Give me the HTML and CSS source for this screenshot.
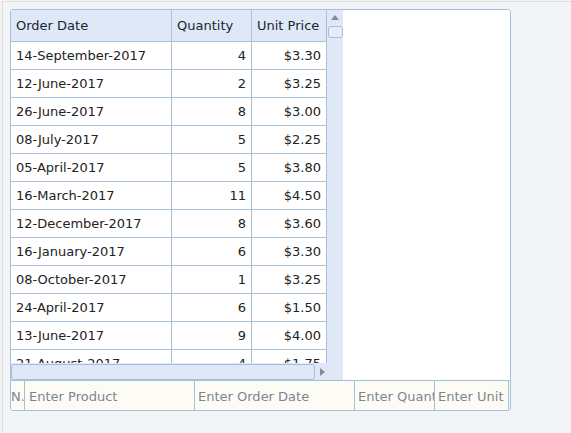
FILE: index.html
```html
<!DOCTYPE html>
<html lang="en">
<head>
  <meta charset="UTF-8">
  <title>Orders Grid</title>
  <link rel="stylesheet" href="styles.css">
</head>
<body>
  <div class="frame">
    <div class="grid">
      <div class="top">
        <div class="pane">
          <div class="view">
            <div class="row head">
              <div class="cell">Order Date</div>
              <div class="cell">Quantity</div>
              <div class="cell">Unit Price</div>
            </div>
            <div class="row"><div class="cell">14-September-2017</div><div class="cell num">4</div><div class="cell num">$3.30</div></div>
            <div class="row"><div class="cell">12-June-2017</div><div class="cell num">2</div><div class="cell num">$3.25</div></div>
            <div class="row"><div class="cell">26-June-2017</div><div class="cell num">8</div><div class="cell num">$3.00</div></div>
            <div class="row"><div class="cell">08-July-2017</div><div class="cell num">5</div><div class="cell num">$2.25</div></div>
            <div class="row"><div class="cell">05-April-2017</div><div class="cell num">5</div><div class="cell num">$3.80</div></div>
            <div class="row"><div class="cell">16-March-2017</div><div class="cell num">11</div><div class="cell num">$4.50</div></div>
            <div class="row"><div class="cell">12-December-2017</div><div class="cell num">8</div><div class="cell num">$3.60</div></div>
            <div class="row"><div class="cell">16-January-2017</div><div class="cell num">6</div><div class="cell num">$3.30</div></div>
            <div class="row"><div class="cell">08-October-2017</div><div class="cell num">1</div><div class="cell num">$3.25</div></div>
            <div class="row"><div class="cell">24-April-2017</div><div class="cell num">6</div><div class="cell num">$1.50</div></div>
            <div class="row"><div class="cell">13-June-2017</div><div class="cell num">9</div><div class="cell num">$4.00</div></div>
            <div class="row"><div class="cell">21-August-2017</div><div class="cell num">4</div><div class="cell num">$1.75</div></div>
          </div>
          <div class="vscroll">
            <span class="arrow-up"></span>
            <span class="vthumb"></span>
          </div>
          <div class="hscroll">
            <span class="hthumb"></span>
            <span class="arrow-right"></span>
          </div>
          <div class="corner"></div>
        </div>
        <div class="blank"></div>
      </div>
      <div class="editor">
        <div class="ecell e-no">N.</div>
        <div class="ecell e-product">Enter Product</div>
        <div class="ecell e-date">Enter Order Date</div>
        <div class="ecell e-qty">Enter Quantity</div>
        <div class="ecell e-price">Enter Unit Price</div>
      </div>
    </div>
  </div>
</body>
</html>
```

FILE: styles.css
```css
body {
  margin: 0;
  background-color: #f3f4f6;
  font-family: "DejaVu Sans", Verdana, sans-serif;
  font-size: 13px;
  color: #222;
}

.frame {
  margin: 1px 0 0 2px;
  border-top: 1px solid #dcdde0;
  border-left: 1px solid #dcdde0;
  height: 431px;
  padding: 7px 0 0 7px;
  box-sizing: border-box;
}

.grid {
  width: 499px;
  height: 400px;
  border: 1px solid #a3bfdc;
  border-radius: 3px;
  background-color: #fff;
  display: flex;
  flex-direction: column;
  overflow: hidden;
}

.top {
  display: flex;
  height: 370px;
}

.pane {
  display: grid;
  grid-template-columns: 315px 17px;
  grid-template-rows: 353px 17px;
  background-color: #dfe8f6;
}

.view {
  overflow: hidden;
  background-color: #fff;
}

.row {
  display: grid;
  grid-template-columns: 161px 80px 74px;
  height: 28px;
}

.cell {
  border-right: 1px solid #a9c2dc;
  border-bottom: 1px solid #a9c2dc;
  padding: 0 5px;
  line-height: 27px;
  white-space: nowrap;
  overflow: hidden;
}

.cell:last-child {
  border-right: none;
}

.num {
  text-align: right;
}

.head {
  height: 32px;
  background-color: #dfe8f6;
}

.head .cell {
  line-height: 31px;
  color: #1b2333;
}

.vscroll {
  border-left: 1px solid #a9c2dc;
  display: flex;
  flex-direction: column;
  align-items: center;
}

.arrow-up {
  margin-top: 5px;
  width: 0;
  height: 0;
  border-left: 4px solid transparent;
  border-right: 4px solid transparent;
  border-bottom: 5px solid #8a8a8a;
}

.vthumb {
  margin-top: 6px;
  margin-left: 1px;
  width: 13px;
  height: 10px;
  border: 1px solid #a3bfdc;
  border-radius: 3px;
  background-color: #e6edf8;
}

.hscroll {
  display: flex;
  align-items: center;
}

.hthumb {
  width: 302px;
  height: 14px;
  border: 1px solid #a3bfdc;
  border-radius: 3px;
  background-color: #dfe8f6;
}

.arrow-right {
  margin-left: 5px;
  width: 0;
  height: 0;
  border-top: 4px solid transparent;
  border-bottom: 4px solid transparent;
  border-left: 5px solid #8a8a8a;
}

.blank {
  flex: 1;
  background-color: #fff;
}

.editor {
  display: flex;
  height: 29px;
  border-top: 1px solid #a3bfdc;
  background-color: #fcfcf4;
}

.ecell {
  box-sizing: border-box;
  border-right: 1px solid #a3bfdc;
  padding: 2px 0 0 4px;
  line-height: 27px;
  color: #7c8590;
  white-space: nowrap;
  overflow: hidden;
  text-overflow: clip;
}

.e-no { width: 14px; padding-left: 0; }
.e-product { width: 170px; }
.e-date { width: 160px; padding-left: 3px; }
.e-qty { width: 80px; padding-left: 3px; }
.e-price { width: 74px; padding-left: 3px; }
```
